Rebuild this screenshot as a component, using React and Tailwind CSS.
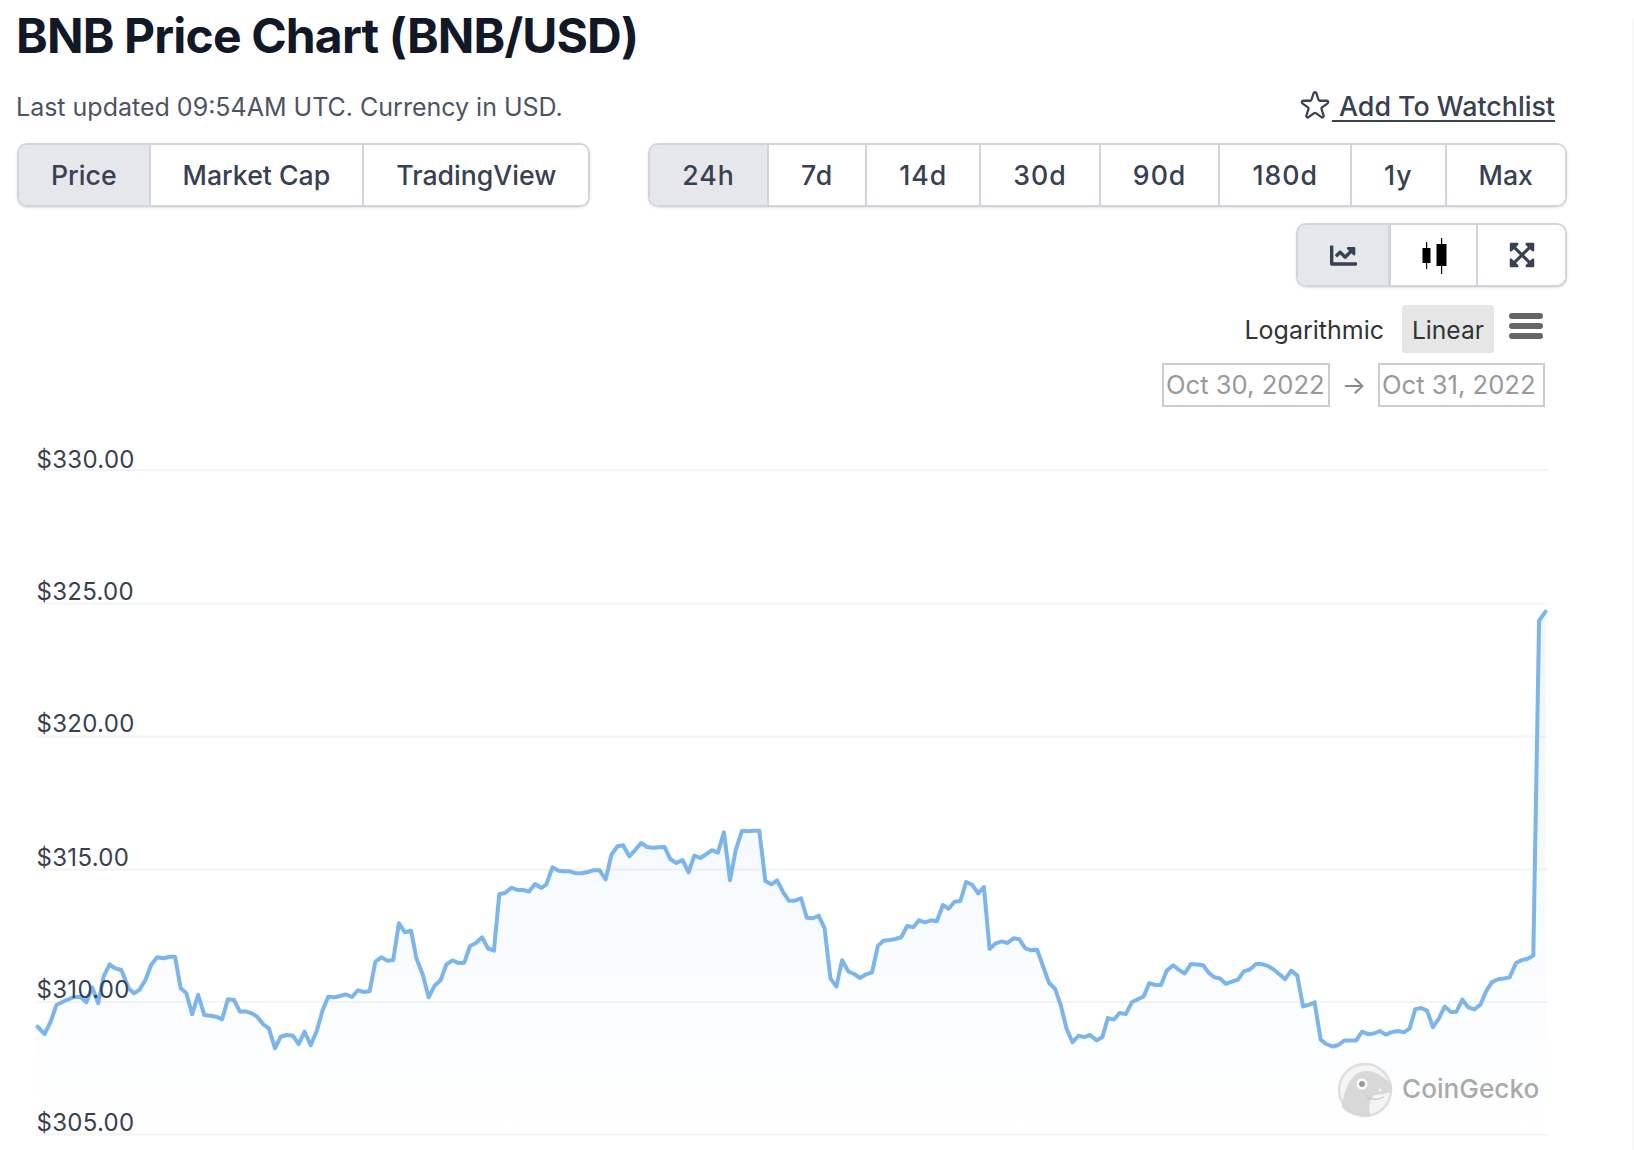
import React from "react";
import { FaChartLine, FaExpandArrowsAlt } from "react-icons/fa";

const z4 = [[105,740],[125,762],[142,725],[158,675],[180,663],[205,652],[225,650],[242,667],[258,622],[275,670],[290,590],[307,553],[322,565],[340,570],[360,625],[375,640],[390,630],[407,600],[423,555],[440,532],[458,535],[475,530],[490,530],[506,625],[522,640],[538,703],[555,645],[572,705],[590,707],[605,710],[622,718],[638,658],[655,660],[672,695],[688,694],[705,700],[720,710],[737,733],[753,745],[770,805],[786,770],[803,765],[820,767],[836,792],[853,755],[870,796],[887,752],[903,692],[919,650],[936,652],[952,648],[968,643],[986,651],[1002,631],[1018,636],[1035,634],[1051,545],[1068,532],[1085,542],[1101,540],[1117,430],[1134,457],[1151,452],[1166,535],[1184,585],[1200,652],[1217,617],[1234,600],[1250,553],[1267,541],[1284,549],[1300,548],[1316,498],[1333,489],[1350,472],[1366,505],[1383,512],[1398,343],[1415,338],[1432,323],[1449,330],[1465,330],[1481,335],[1498,312],[1516,324]];
const z5 = [[18,313],[35,262],[52,272],[68,274],[84,274],[100,280],[118,280],[134,276],[150,271],[167,271],[184,298],[200,224],[217,199],[233,196],[250,229],[266,211],[283,189],[300,201],[316,203],[333,202],[349,201],[365,238],[382,249],[399,240],[416,277],[432,227],[449,234],[466,222],[482,211],[498,218],[515,157],[532,301],[548,210],[566,152],[582,154],[598,152],[614,152],[631,303],[648,313],[664,301],[681,337],[697,362],[714,362],[731,355],[747,413],[764,415],[780,407],[797,445],[813,595],[830,620],[846,541],[863,574],[880,582],[896,594],[913,583],[930,577],[946,497],[962,482],[979,480],[995,477],[1012,471],[1028,438],[1045,442],[1061,421],[1078,427],[1095,421],[1111,424],[1128,375],[1144,386],[1161,365],[1177,363],[1193,306],[1210,314],[1227,340],[1243,321],[1259,507],[1276,490],[1293,484],[1309,489],[1326,475],[1342,478],[1359,505],[1376,511],[1392,509],[1410,563],[1425,608],[1442,626],[1458,675],[1474,745]];
const z6 = [[7,1257],[24,1239],[40,1243],[56,1237],[74,1252],[90,1243],[105,1190],[122,1194],[138,1176],[155,1179],[172,1146],[188,1138],[205,1130],[220,1093],[237,1098],[253,1098],[269,1058],[287,1043],[303,1056],[319,1066],[336,1040],[353,1041],[370,1043],[385,1063],[400,1076],[417,1080],[433,1095],[450,1089],[467,1083],[483,1060],[500,1055],[517,1040],[533,1040],[550,1045],[566,1055],[582,1068],[598,1082],[615,1058],[632,1072],[648,1158],[665,1153],[680,1146],[697,1250],[712,1262],[730,1269],[746,1265],[763,1252],[780,1252],[796,1252],[812,1228],[829,1235],[845,1233],[861,1226],[878,1236],[895,1229],[911,1226],[928,1230],[944,1219],[960,1165],[977,1162],[993,1170],[1009,1215],[1025,1192],[1042,1158],[1058,1173],[1074,1173],[1091,1139],[1107,1160],[1124,1166],[1141,1153],[1157,1115],[1173,1090],[1190,1082],[1206,1080],[1222,1077],[1240,1037],[1256,1029],[1272,1025],[1288,1016],[1304,85],[1322,60]];

const points = [
  ...z4.map(([x, y]) => [x / 2.8, 780 + y / 3]),
  ...z5.map(([x, y]) => [540 + x / 2.8, 780 + y / 3]),
  ...z6.map(([x, y]) => [1070 + x / 2.78, 590 + y / 2.78]),
].map(([x, y]) => [Number(x.toFixed(1)), Number(y.toFixed(1))]);

const linePath = "M" + points.map((p) => p.join(" ")).join("L");
const areaPath = linePath + `L${points[points.length - 1][0]} 1134L${points[0][0]} 1134Z`;

const grid = [
  { y: 470, by: 468, label: "$330.00" },
  { y: 603.5, by: 599.5, label: "$325.00" },
  { y: 736.5, by: 732, label: "$320.00" },
  { y: 869.5, by: 866, label: "$315.00" },
  { y: 1002, by: 998, label: "$310.00" },
  { y: 1134.5, by: 1131, label: "$305.00" },
];

function Seg({ items, active }) {
  return (
    <div className="flex h-[64px] rounded-[10px] border-2 border-[#d1d5db] shadow-sm overflow-hidden text-[26.7px] font-medium text-[#374151]">
      {items.map((t, i) => (
        <button
          key={t}
          className={
            (t === active ? "bg-[#e5e7eb] " : "bg-white ") +
            (i > 0 ? "border-l-2 border-[#d1d5db] " : "") +
            (/\d/.test(t) ? "tracking-[1px] " : "") +
            "px-[32px] h-full leading-none"
          }
        >
          {t}
        </button>
      ))}
    </div>
  );
}

export default function App() {
  return (
    <div className="flex h-[1150px] w-[1634px] overflow-hidden bg-white font-['Inter',sans-serif]">
      <main className="flex-1 min-w-0 pl-[17px] pr-[65px]">
        <h1 className="pt-[7px] h-[71px] text-[48px] leading-[58px] font-bold text-[#111827] tracking-[-0.85px] -ml-[1px]">
          BNB Price Chart (BNB/USD)
        </h1>
        <div className="mt-[15px] h-[40px] flex items-center justify-between pr-[12px]">
          <span className="text-[25px] text-[#4b5563] -ml-[1px] pt-[3px]">Last updated 09:54AM UTC. Currency in USD.</span>
          <a className="flex items-center text-[26.8px] font-medium text-[#374151]">
            <svg viewBox="0 0 24 24" fill="none" stroke="currentColor" strokeWidth="1.6" strokeLinejoin="round" className="w-[34px] h-[34px] shrink-0">
              <path d="M11.049 2.927c.3-.921 1.603-.921 1.902 0l1.519 4.674a1 1 0 00.95.69h4.915c.969 0 1.371 1.24.588 1.81l-3.976 2.888a1 1 0 00-.364 1.118l1.518 4.674c.3.922-.755 1.688-1.538 1.118l-3.976-2.888a1 1 0 00-1.176 0l-3.976 2.888c-.783.57-1.838-.197-1.538-1.118l1.518-4.674a1 1 0 00-.363-1.118l-3.976-2.888c-.784-.57-.38-1.81.588-1.81h4.914a1 1 0 00.951-.69l1.519-4.674z" />
            </svg>
            <span className="underline underline-offset-[4px] whitespace-pre"> Add To Watchlist</span>
          </a>
        </div>
        <div className="mt-[17px] flex justify-between">
          <Seg items={["Price", "Market Cap", "TradingView"]} active="Price" />
          <Seg items={["24h", "7d", "14d", "30d", "90d", "180d", "1y", "Max"]} active="24h" />
        </div>
        <div className="mt-[16px] flex justify-end">
          <div className="flex h-[64px] w-[271px] rounded-[10px] border-2 border-[#d1d5db] shadow-sm overflow-hidden text-[#374151]">
            <div className="w-[93px] bg-[#e5e7eb] flex items-center justify-center border-r-[3px] border-[#d1d5db]">
              <FaChartLine className="w-[27px] h-[27px]" />
            </div>
            <div className="w-[87px] flex items-center justify-center border-r-2 border-[#d1d5db]">
              <svg viewBox="0 0 26 36" className="w-[26px] h-[36px] mt-[1px]">
                <rect x="1.5" y="10" width="8" height="15" fill="#000" />
                <rect x="5" y="4" width="1.2" height="27" fill="#000" />
                <rect x="15.5" y="6" width="10" height="22" fill="#000" />
                <rect x="20" y="0" width="1.2" height="36" fill="#000" />
              </svg>
            </div>
            <div className="flex-1 flex items-center justify-center">
              <FaExpandArrowsAlt className="w-[28px] h-[28px]" />
            </div>
          </div>
        </div>
        <div className="mt-[18px] flex justify-end items-start pr-[24px] text-[25px] text-[#333333]">
          <span className="h-[48px] leading-[51px]">Logarithmic</span>
          <span className="ml-[18px] w-[92px] h-[48px] leading-[51px] text-[24.6px] text-center bg-[#e6e6e6] rounded-[3px]">Linear</span>
          <div className="ml-[15px] mt-[8px] w-[34px] flex flex-col gap-[4px]">
            <span className="h-[6px] rounded-[3px] bg-[#666666]" />
            <span className="h-[6px] rounded-[3px] bg-[#666666]" />
            <span className="h-[6px] rounded-[3px] bg-[#666666]" />
          </div>
        </div>
        <div className="mt-[10px] flex justify-end items-center pr-[22px] text-[25.6px] text-[#999999]">
          <span className="w-[168px] h-[44px] leading-[40px] border-2 border-[#cccccc] pl-[2px]">Oct 30, 2022</span>
          <span className="w-[48px] text-center text-[#888888]">→</span>
          <span className="w-[167px] h-[44px] leading-[40px] border-2 border-[#cccccc] pl-[2px]">Oct 31, 2022</span>
        </div>
        <svg viewBox="0 420 1634 730" className="block w-[1634px] h-[730px] -ml-[17px] mt-[13px]" style={{ fontFamily: "Inter, sans-serif" }}>
          <defs>
            <linearGradient id="fillG" x1="0" y1="0" x2="0" y2="1">
              <stop offset="0" stopColor="#7cb5ec" stopOpacity="0.13" />
              <stop offset="1" stopColor="#7cb5ec" stopOpacity="0" />
            </linearGradient>
          </defs>
          {grid.map((g) => (
            <rect key={g.y} x="36" y={g.y - 1} width="1512" height="2" fill="#f3f4f6" />
          ))}
          <path d={areaPath} fill="url(#fillG)" />
          <path d={linePath} fill="none" stroke="#7cb5ec" strokeWidth="4" strokeLinejoin="round" strokeLinecap="round" />
          {grid.map((g) => (
            <text key={g.label} x="36.5" y={g.by} fontSize="24" letterSpacing="0.3" fill="#374151">{g.label}</text>
          ))}
          <g>
            <circle cx="1365" cy="1090" r="26" fill="#f4f4f4" stroke="#dedede" strokeWidth="2.4" />
            <path d="M1342 1107c1-8 2-14 5-20 3-7 7-13 13-15 6-2 13-1 18 2 5 3 10 7 13 10 2 3 2 6-1 8-5 2-11 3-16 3-3 4-5 8-5 13 0 3 1 6 2 8-7 1-16 0-22-3-3-2-6-4-7-6z" fill="#d8d8d8" />
            <circle cx="1362" cy="1084" r="5.5" fill="#ffffff" />
            <circle cx="1362" cy="1084" r="3" fill="#9a9a9a" />
            <circle cx="1380" cy="1090" r="1.6" fill="#f5f5f5" />
            <path d="M1367 1097c5 3 11 3 17 0" fill="none" stroke="#c4c4c4" strokeWidth="1.2" />
            <text x="1402" y="1098" fontSize="26.2" fontWeight="500" fill="#aaaaaa">CoinGecko</text>
          </g>
        </svg>
      </main>
      <aside className="mt-[18px] w-[2px] bg-[#f8f8f8]" />
    </div>
  );
}
